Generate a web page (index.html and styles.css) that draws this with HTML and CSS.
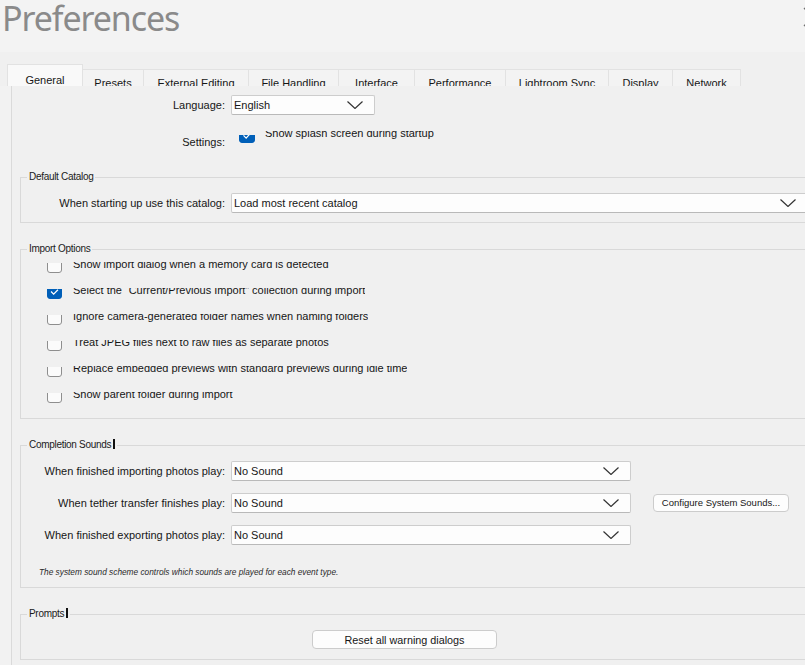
FILE: index.html
```html
<!DOCTYPE html>
<html lang="en">
<head>
<meta charset="utf-8">
<title>Preferences</title>
<link rel="stylesheet" href="styles.css">
</head>
<body>
<header class="titlebar">
  <h1 class="title">Preferences</h1>
  <svg class="close" width="20" height="20" viewBox="0 0 20 20"><path d="M1 1 L19 19 M1 19 L19 1" stroke="#6f6f6f" stroke-width="1.3" fill="none"/></svg>
</header>
<nav class="tabs">
  <div class="tab active tab-general">General</div>
  <div class="tab tab-presets">Presets</div>
  <div class="tab tab-external">External Editing</div>
  <div class="tab tab-files">File Handling</div>
  <div class="tab tab-interface">Interface</div>
  <div class="tab tab-performance">Performance</div>
  <div class="tab tab-sync">Lightroom Sync</div>
  <div class="tab tab-display">Display</div>
  <div class="tab tab-network">Network</div>
</nav>
<main class="panel">
  <div class="row">
    <span class="lbl">Language:</span>
    <div class="select w-lang"><span>English</span><svg class="chev" viewBox="0 0 16 8"><path d="M0.5 0.5 L8 7.5 L15.5 0.5" stroke="#333" stroke-width="1.2" fill="none"/></svg></div>
  </div>
  <div class="row settings">
    <span class="lbl lbl-settings">Settings:</span>
    <div class="opt splash">
      <span class="cbwin"><span class="cb on"><svg viewBox="0 0 16 16"><path d="M4 8.5 L7 11.5 L12 6" stroke="#fff" stroke-width="1.4" fill="none"/></svg></span></span>
      <span class="txtwin"><span class="txt">Show splash screen during startup</span></span>
    </div>
  </div>

  <fieldset class="group g-catalog">
    <legend>Default Catalog</legend>
    <div class="group-body">
      <div class="row">
        <span class="lbl">When starting up use this catalog:</span>
        <div class="select w-catalog"><span>Load most recent catalog</span><svg class="chev" viewBox="0 0 16 8"><path d="M0.5 0.5 L8 7.5 L15.5 0.5" stroke="#333" stroke-width="1.2" fill="none"/></svg></div>
      </div>
    </div>
  </fieldset>

  <fieldset class="group g-import">
    <legend>Import Options</legend>
    <div class="group-body">
      <div class="opt">
        <span class="cbwin"><span class="cb"></span></span>
        <span class="txtwin"><span class="txt">Show import dialog when a memory card is detected</span></span>
      </div>
      <div class="opt">
        <span class="cbwin"><span class="cb on"><svg viewBox="0 0 15 15"><path d="M3.5 7.5 L6.5 10.5 L11.5 5.5" stroke="#fff" stroke-width="1.4" fill="none"/></svg></span></span>
        <span class="txtwin"><span class="txt">Select the “Current/Previous Import” collection during import</span></span>
      </div>
      <div class="opt">
        <span class="cbwin"><span class="cb"></span></span>
        <span class="txtwin"><span class="txt">Ignore camera-generated folder names when naming folders</span></span>
      </div>
      <div class="opt">
        <span class="cbwin"><span class="cb"></span></span>
        <span class="txtwin"><span class="txt">Treat JPEG files next to raw files as separate photos</span></span>
      </div>
      <div class="opt">
        <span class="cbwin"><span class="cb"></span></span>
        <span class="txtwin"><span class="txt">Replace embedded previews with standard previews during idle time</span></span>
      </div>
      <div class="opt">
        <span class="cbwin"><span class="cb"></span></span>
        <span class="txtwin"><span class="txt">Show parent folder during import</span></span>
      </div>
    </div>
  </fieldset>

  <fieldset class="group g-sounds">
    <legend>Completion Sounds<span class="caret"></span></legend>
    <div class="group-body">
      <div class="row sound-row">
        <span class="lbl">When finished importing photos play:</span>
        <div class="select w-sound"><span>No Sound</span><svg class="chev" viewBox="0 0 16 8"><path d="M0.5 0.5 L8 7.5 L15.5 0.5" stroke="#333" stroke-width="1.2" fill="none"/></svg></div>
      </div>
      <div class="row sound-row">
        <span class="lbl">When tether transfer finishes play:</span>
        <div class="select w-sound"><span>No Sound</span><svg class="chev" viewBox="0 0 16 8"><path d="M0.5 0.5 L8 7.5 L15.5 0.5" stroke="#333" stroke-width="1.2" fill="none"/></svg></div>
        <button class="btn btn-config">Configure System Sounds...</button>
      </div>
      <div class="row sound-row">
        <span class="lbl">When finished exporting photos play:</span>
        <div class="select w-sound"><span>No Sound</span><svg class="chev" viewBox="0 0 16 8"><path d="M0.5 0.5 L8 7.5 L15.5 0.5" stroke="#333" stroke-width="1.2" fill="none"/></svg></div>
      </div>
      <p class="note">The system sound scheme controls which sounds are played for each event type.</p>
    </div>
  </fieldset>

  <fieldset class="group g-prompts">
    <legend>Prompts<span class="caret"></span></legend>
    <div class="group-body">
      <button class="btn btn-reset">Reset all warning dialogs</button>
    </div>
  </fieldset>
</main>
</body>
</html>
```

FILE: styles.css
```css
html, body {
  margin: 0;
  overflow: hidden;
}
body {
  width: 805px;
  height: 665px;
  background: #f2f2f2;
  font-family: "Liberation Sans", Arial, sans-serif;
  font-size: 11px;
  color: #161616;
  position: relative;
}

/* title bar */
.titlebar {
  height: 52px;
  background: #f3f3f3;
  position: relative;
}
.title {
  margin: 0;
  padding-left: 2px;
  font-family: "Noto Sans", sans-serif;
  font-weight: 400;
  font-size: 34px;
  line-height: 37px;
  color: #8a8a8a;
  letter-spacing: -1.1px;
}
.close {
  position: absolute;
  left: 803px;
  top: 7px;
}

/* tabs */
.tabs {
  box-sizing: border-box;
  height: 34px;
  display: flex;
  align-items: flex-end;
  padding-left: 7px;
  background: #f0f0f0;
}
.tab {
  box-sizing: border-box;
  flex: none;
  height: 17px;
  overflow: hidden;
  padding-top: 6px;
  line-height: 14px;
  text-align: center;
  white-space: nowrap;
  background: #f3f3f3;
  border-top: 1px solid #e2e2e2;
  border-right: 1px solid #e2e2e2;
  color: #161616;
}
.tab.active {
  height: 22px;
  padding-top: 8px;
  background: #f9f9f9;
  border-left: 1px solid #e2e2e2;
}
.tab-general { width: 76px; }
.tab-presets { width: 61px; }
.tab-external { width: 105px; }
.tab-files { width: 90px; }
.tab-interface { width: 76px; }
.tab-performance { width: 91px; }
.tab-sync { width: 103px; }
.tab-display { width: 64px; }
.tab-network { width: 68px; }

/* main panel */
.panel {
  box-sizing: border-box;
  margin-left: 11px;
  border-left: 1px solid #dadada;
  background: #f0f0f0;
  padding: 9px 0 0 8px;
  height: 579px;
  overflow: hidden;
}
.row {
  display: flex;
  align-items: center;
  height: 20px;
}
.lbl {
  flex: none;
  width: 205px;
  margin-right: 6px;
  text-align: right;
  line-height: 16px;
  white-space: nowrap;
}
.group .lbl {
  width: 204px;
}

.select {
  box-sizing: border-box;
  height: 20px;
  flex: none;
  display: flex;
  align-items: center;
  justify-content: space-between;
  padding: 0 11px 0 2px;
  background: #fdfdfd;
  border: 1px solid #cdcdcd;
  border-bottom-color: #b9b9b9;
  border-radius: 2px;
  line-height: 16px;
  white-space: nowrap;
}
.chev {
  width: 16px;
  height: 8px;
  flex: none;
}
.w-lang { width: 144px; }
.w-catalog { width: 577px; }
.w-sound { width: 400px; }

/* settings row */
.settings {
  margin-top: 16px;
  height: 18px;
  align-items: flex-start;
}
.lbl-settings {
  padding-top: 3px;
}

/* clipped option rows */
.opt {
  display: flex;
  align-items: flex-start;
  height: 12px;
  margin-bottom: 14px;
}
.opt:last-child {
  margin-bottom: 0;
}
.cbwin {
  flex: none;
  display: block;
  width: 15px;
  height: 10px;
  margin-top: 1px;
  overflow: hidden;
}
.cb {
  box-sizing: border-box;
  display: block;
  width: 15px;
  height: 15px;
  margin-top: -5px;
  border: 1px solid #8e8e8e;
  border-radius: 3px;
  background: #fbfbfb;
}
.cb.on {
  background: #005fb8;
  border-color: #005fb8;
}
.cb svg {
  display: block;
  width: 100%;
  height: 100%;
}
.txtwin {
  display: block;
  height: 10px;
  margin-left: 11px;
  overflow: hidden;
}
.txt {
  display: block;
  line-height: 16px;
  margin-top: -6px;
  white-space: nowrap;
}

.splash {
  margin-left: 8px;
  margin-bottom: 0;
}
.splash .cbwin {
  width: 16px;
  height: 8px;
  margin-top: 4px;
}
.splash .cb {
  width: 16px;
  height: 16px;
  margin-top: -8px;
}
.splash .txtwin {
  height: 9px;
  margin-left: 10px;
}

/* group boxes */
.group {
  margin: 0;
  width: 820px;
  box-sizing: border-box;
  border: 1px solid #d9d9d9;
  border-right: none;
  padding: 0;
  min-inline-size: 0;
}
.group legend {
  margin-left: 6px;
  padding: 0 2px;
  font-size: 10px;
  letter-spacing: -0.3px;
  line-height: 12px;
  color: #1a1a1a;
}
.caret {
  display: inline-block;
  width: 2px;
  height: 10px;
  margin-left: 2px;
  background: #111;
  vertical-align: -1px;
}

.g-catalog { margin-top: 22px; }
.g-catalog .group-body { padding: 10px 0 9px; }
.g-import { margin-top: 20px; }
.g-import .group-body { padding: 7px 0 14px 26px; }
.g-sounds { margin-top: 20px; }
.g-sounds .group-body { padding: 10px 0 9px; }
.sound-row + .sound-row {
  margin-top: 12px;
}
.g-prompts { margin-top: 20px; }
.g-prompts .group-body { padding: 10px 0 10px 291px; }

.note {
  margin: 21px 0 0 18px;
  font-style: italic;
  font-size: 8.3px;
  line-height: 12px;
  color: #2a2a2a;
}

.btn {
  box-sizing: border-box;
  height: 18px;
  padding: 0;
  background: #fdfdfd;
  border: 1px solid #cccccc;
  border-radius: 4px;
  font-family: "Liberation Sans", Arial, sans-serif;
  font-size: 9.5px;
  line-height: 14px;
  color: #161616;
  text-align: center;
  white-space: nowrap;
}
.btn-config {
  width: 136px;
  margin-left: 22px;
}
.btn-reset {
  display: block;
  width: 185px;
  height: 19px;
  font-size: 10.8px;
}
```
